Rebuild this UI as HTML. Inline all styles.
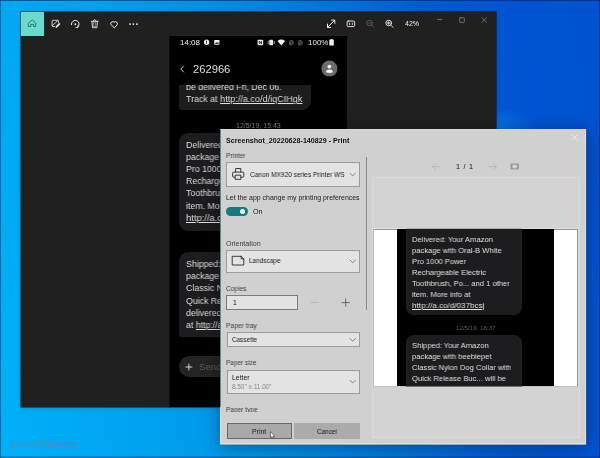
<!DOCTYPE html>
<html><head><meta charset="utf-8">
<style>
*{margin:0;padding:0;box-sizing:border-box}
html,body{width:600px;height:458px;overflow:hidden}
body{position:relative;font-family:"Liberation Sans",sans-serif;background:#0c63d9}
.abs,.t,.box,svg{position:absolute}
.layer{position:absolute;left:0;top:0;width:600px;height:458px}
.t{will-change:transform}
#bg{background:radial-gradient(ellipse 42px 26px at 497px 133px,rgba(25,150,240,.55),rgba(25,150,240,0) 100%),linear-gradient(80deg,#00b1f8 0%,#00a5f2 17.6%,#009cec 29.4%,#008ce4 44%,#0076dc 58.8%,#005ad0 75%,#0054d3 87%,#0052cf 100%);box-shadow:inset 1px 0 0 rgba(0,40,90,.5),inset -1px 0 0 rgba(0,30,90,.5),inset 0 -1.5px 0.5px rgba(0,50,110,.45),inset 0 1px 0 rgba(0,30,70,.55)}
#bgtop{display:none}
#win{left:20.6px;top:12.2px;width:475.4px;height:394.8px;background:#202020;box-shadow:0 0 0 .6px rgba(25,12,8,.8),0 1px 5px rgba(0,0,0,.14)}
#home{left:20.6px;top:12.2px;width:23.2px;height:23.6px;background:#69dbcb}
#phone{clip-path:inset(36px 253px 50.9px 169.5px);background:#000;color:#dedede}
.t{white-space:nowrap;line-height:1;transform-origin:0 50%}
.m{font-size:9px;color:#dedede;transform:scaleX(.975)}
.bub{position:absolute;background:#1d1d1f;border-radius:9px}
#dlg{clip-path:inset(129.3px 13.9px 13.5px 220px);background:#d0d0d0;color:#1a1a1a}
.d{font-size:6.9px;transform:scaleX(.95)}
.lbl{color:#3c3c3c}
.box{background:#e3e3e3;border:1px solid #9c9c9c}
u{text-decoration-thickness:.5px;text-underline-offset:1px}
</style></head><body>
<div id="bg" class="layer"></div>
<div id="bgtop" class="abs"></div>
<div id="win" class="abs"></div>
<div id="home" class="abs"></div>


<!-- toolbar icons -->
<svg style="left:0;top:0" width="600" height="458" viewBox="0 0 600 458" fill="none" stroke="#f2f2f2" stroke-width="0.9" stroke-linecap="round" stroke-linejoin="round">
  <!-- home -->
  <path d="M28.7 23 L32.2 19.9 L35.7 23 V26.5 H33.5 V24.4 H30.9 V26.5 H28.7 Z" stroke="#245853" stroke-width="0.75"/>
  <!-- edit -->
  <g transform="translate(0.4 0)"><path d="M58 22.4 V21 Q58 20.3 57.3 20.3 H52.4 Q51.7 20.3 51.7 21 V25.9 Q51.7 26.6 52.4 26.6 H54.2 M52 25.6 L57.4 20.6" stroke-width="0.8"/>
  <path d="M55.6 27.3 L55.9 26.1 L58.9 23.2 L59.8 24.1 L56.8 27 Z" stroke-width="0.7" fill="#f2f2f2"/></g>
  <!-- rotate -->
  <path d="M71.4 24.6 A3.9 3.9 0 1 1 77.6 27.4" stroke-width="0.95"/>
  <path d="M76 27.6 H77.8 V25.8" stroke-width="0.9"/>
  <circle cx="75.3" cy="24.3" r="0.95" fill="#f2f2f2" stroke="none"/>
  <!-- trash -->
  <path d="M91.2 21.3 H98.2 M93.4 21.1 A1.3 1.3 0 0 1 96 21.1 M92 21.5 L92.5 27.7 H96.9 L97.4 21.5" stroke-width="0.85"/>
  <rect x="93.7" y="22.7" width="2" height="3.8" stroke-width="0.7" stroke="#bdbdbd"/>
  <!-- heart -->
  <path d="M114.05 27.6 L110.8 24.4 A2.08 2.08 0 0 1 114.05 22.1 A2.08 2.08 0 0 1 117.3 24.4 Z" stroke-width="0.95"/>
  <!-- dots -->
  <g fill="#f2f2f2" stroke="none"><circle cx="130" cy="24.1" r="0.9"/><circle cx="133.4" cy="24.1" r="0.9"/><circle cx="136.9" cy="24.1" r="0.9"/></g>
  <!-- expand -->
  <path d="M327.7 27.2 L334.6 20.3 M331.6 20.1 H334.8 V23.3 M327.5 24.1 V27.4 H330.7" stroke-width="1"/>
  <!-- aspect -->
  <rect x="347.1" y="21" width="7.5" height="5.6" rx="1.1"/>
  <path d="M349.4 22.9 V24.8 M352.3 22.9 V24.8" stroke-width="0.8"/>
  <!-- zoom out -->
  <g stroke="#5c5c5c"><circle cx="369.6" cy="23" r="2.8"/><path d="M371.7 25.1 L373.9 27.3 M368.3 23 H370.9"/></g>
  <!-- zoom in -->
  <circle cx="388.7" cy="23" r="2.8"/><path d="M390.8 25.1 L393 27.3 M387.4 23 H390 M388.7 21.7 V24.3"/>
  <!-- window controls -->
  <g stroke="#8e8e8e" stroke-width="0.7"><path d="M437.4 19.6 H441.8"/><rect x="459.7" y="17.8" width="4.6" height="4.6" rx="0.5"/><path d="M481.9 17.6 L486.6 22.3 M486.6 17.6 L481.9 22.3"/></g>
</svg>
<div class="t" style="left:404.5px;top:20.3px;font-size:7px;color:#f0f0f0;transform:scaleX(.98)">42%</div>

<!-- phone screenshot -->
<div id="phone" class="layer">
  <div class="bub" style="left:179px;top:70px;width:132px;height:39.5px;border-radius:9px 9px 9px 2.5px"></div>
  <div class="t m" style="left:186.0px;top:82.7px">be delivered Fri, Dec 06.</div>
  <div class="abs" style="left:169px;top:36px;width:179px;height:48.5px;background:#000"></div>
  <div class="t" style="left:179.5px;top:38.5px;font-size:8px;color:#e8e8e8">14:08</div>
  <div class="t" style="left:307.5px;top:38.5px;font-size:8px;color:#e8e8e8">100%</div>
  <div class="t" style="left:192.5px;top:63.5px;font-size:11.2px;color:#dcdcdc">262966</div>
  <div class="t m" style="left:186.0px;top:94.6px">Track at <u style="display:inline-block;transform:scaleX(1.035);transform-origin:0 50%">http://a.co/d/iqCIHgk</u></div>
  <div class="t" style="left:236px;top:121.5px;font-size:7px;color:#808080">12/5/19, 15:43</div>
  <div class="bub" style="left:179px;top:133px;width:150px;height:98px"></div>
  <div class="t m" style="left:186.0px;top:140.5px">Delivered: Your Amazon</div>
  <div class="t m" style="left:186.0px;top:152.7px">package with Oral-B White</div>
  <div class="t m" style="left:186.0px;top:164.9px">Pro 1000 Power</div>
  <div class="t m" style="left:186.0px;top:177.1px">Rechargeable Electric</div>
  <div class="t m" style="left:186.0px;top:189.3px">Toothbrush, Po... and 1 other</div>
  <div class="t m" style="left:186.0px;top:201.5px">item. More info at</div>
  <div class="t m" style="left:186.0px;top:213.7px"><u style="display:inline-block;transform:scaleX(1.07);transform-origin:0 50%">http://a.co/d/037bcsj</u></div>
  <div class="bub" style="left:179px;top:252px;width:150px;height:84.8px;border-radius:9px 9px 9px 3px"></div>
  <div class="t m" style="left:186.0px;top:260.0px">Shipped: Your Amazon</div>
  <div class="t m" style="left:186.0px;top:272.2px">package with beebiepet</div>
  <div class="t m" style="left:186.0px;top:284.4px">Classic Nylon Dog Collar with</div>
  <div class="t m" style="left:186.0px;top:296.6px">Quick Release Buc... will be</div>
  <div class="t m" style="left:186.0px;top:308.8px">delivered Sat, Dec 07. Track</div>
  <div class="t m" style="left:186.0px;top:321.0px">at <u>http://a.co/d/9gBfC3u</u></div>
  <div class="bub" style="left:179.3px;top:356px;width:160px;height:21px;border-radius:10.5px;background:#242424"></div>
  <div class="t" style="left:199px;top:362.2px;font-size:9.6px;color:#5c5c5c">Send message</div>
  <svg style="left:0;top:0" width="600" height="458" viewBox="0 0 600 458">
    <circle cx="206.6" cy="42.3" r="2.7" fill="#f0f0f0"/><rect x="206.2" y="40.7" width="0.8" height="2.1" fill="#000"/><rect x="206.2" y="43.3" width="0.8" height="0.8" fill="#000"/>
    <rect x="214.2" y="39.9" width="5.2" height="4.8" rx="0.6" fill="#f0f0f0"/><path d="M214.9 43.7 L216.2 42.2 L217.1 43 L218 41.9 L218.9 43.7 Z" fill="#000"/>
    <rect x="257.6" y="39.8" width="5.6" height="5.4" rx="0.7" fill="#e8e8e8"/><path d="M259.3 44 V41 L261.5 44 V41" stroke="#000" stroke-width="0.7" fill="none"/>
    <rect x="269.3" y="39.7" width="3.8" height="5.6" rx="0.8" fill="#e8e8e8"/><path d="M268.2 41 V44 M274.2 41 V44" stroke="#e8e8e8" stroke-width="0.7"/>
    <path d="M277.5 40.9 Q281.3 38.3 285.1 40.9 L281.3 45.5 Z" fill="#f0f0f0"/>
    <path d="M289 39.9 H292 L293.7 41.6 V45.2 H289 Z" fill="#4a4a4a"/><path d="M288.7 39.6 L294 45.4" stroke="#000" stroke-width="0.7"/>
    <path d="M298 39.9 H301 L302.7 41.6 V45.2 H298 Z" fill="#4a4a4a"/><path d="M297.7 39.6 L303 45.4" stroke="#000" stroke-width="0.7"/>
    <path d="M330.6 39 H332.5 V39.8 H333.8 V45.5 H329.3 V39.8 H330.6 Z" fill="#f0f0f0"/>
    <path d="M183.6 66 L180.8 69 L183.6 72" stroke="#d8d8d8" stroke-width="0.9" fill="none" stroke-linecap="round" stroke-linejoin="round"/>
    <circle cx="329.4" cy="68.6" r="8" fill="#6b6b6b"/>
    <circle cx="329.4" cy="66.6" r="1.9" fill="#f4f4f4"/><path d="M325.9 72.3 Q325.9 69.4 329.4 69.4 Q332.9 69.4 332.9 72.3 Q329.4 73.8 325.9 72.3 Z" fill="#f4f4f4"/>
    <path d="M185.5 367 H192.3 M188.9 363.6 V370.4" stroke="#e4e4e4" stroke-width="0.9"/>
  </svg>
</div>

<!-- print dialog -->
<div class="abs" style="left:219.6px;top:128.9px;width:366.8px;height:315.9px;background:#4a9292;box-shadow:0 2px 16px rgba(0,0,0,.36)"></div>
<div id="dlg" class="layer">
  <div class="abs" style="left:220px;top:129.3px;width:366.1px;height:315.2px;border:1px solid #e4deda"></div>
  <div class="abs" style="left:220px;top:129.3px;width:.7px;height:278px;background:#4f9090"></div>
  <div class="t" style="left:226px;top:138.4px;font-size:7.1px;font-weight:bold;color:#111;transform:scaleX(1.005)">Screenshot_20220628-140829 - Print</div>
  <div class="t d lbl" style="left:226px;top:152.6px;transform:scaleX(0.964)">Printer</div>
  <div class="box" style="left:226.3px;top:162.3px;width:133.3px;height:24.6px"></div>
  <div class="t d" style="left:249.5px;top:172.3px;transform:scaleX(0.95)">Canon MX920 series Printer WS</div>
  <div class="t d" style="left:226px;top:194.5px;transform:scaleX(1.005)">Let the app change my printing preferences</div>
  <div class="abs" style="left:226px;top:206.7px;width:21.7px;height:9.8px;border-radius:5px;background:#147a7c"></div>
  <div class="abs" style="left:240px;top:208.9px;width:5.4px;height:5.4px;border-radius:3px;background:#fff"></div>
  <div class="t d" style="left:253px;top:208.5px;transform:scaleX(1.043)">On</div>
  <div class="t d lbl" style="left:226px;top:240.5px;transform:scaleX(1.028)">Orientation</div>
  <div class="box" style="left:226.3px;top:250.2px;width:133.3px;height:22.4px"></div>
  <div class="t d" style="left:249px;top:257.5px;transform:scaleX(0.933)">Landscape</div>
  <div class="t d lbl" style="left:226px;top:285.5px;transform:scaleX(0.954)">Copies</div>
  <div class="box" style="left:226.3px;top:294.6px;width:71.4px;height:15.2px;border-color:#7c7c7c"></div>
  <div class="t d" style="left:232.5px;top:300.0px;transform:scaleX(1.0)">1</div>
  <div class="t d lbl" style="left:226px;top:322.5px;transform:scaleX(0.974)">Paper tray</div>
  <div class="box" style="left:226.5px;top:332px;width:133px;height:15px"></div>
  <div class="t d" style="left:232px;top:337.0px;transform:scaleX(0.929)">Cassette</div>
  <div class="t d lbl" style="left:226px;top:359.5px;transform:scaleX(0.936)">Paper size</div>
  <div class="box" style="left:226.5px;top:369.5px;width:133px;height:24px"></div>
  <div class="t d" style="left:232px;top:374.5px;transform:scaleX(0.981)">Letter</div>
  <div class="t d" style="left:232px;top:383.7px;color:#858585;transform:scaleX(0.932)">8.50" x 11.00"</div>
  <div class="abs" style="left:224px;top:400px;width:138px;height:12px;overflow:hidden"><div class="t d lbl" style="left:2px;top:6.7px;transform:scaleX(0.95)">Paper type</div></div>
  <div class="abs" style="left:226.5px;top:423.2px;width:65.5px;height:15.6px;background:#a9a9a9;border:1px solid #686868"></div>
  <div class="t d" style="left:252px;top:429px;transform:scaleX(1.0)">Print</div>
  <div class="abs" style="left:294px;top:423.1px;width:65.5px;height:15.7px;background:#ababab"></div>
  <div class="t d" style="left:317px;top:429px;transform:scaleX(0.931)">Cancel</div>
  <div class="abs" style="left:365.6px;top:157px;width:1.2px;height:153px;background:#8a8a8a"></div>
  <svg style="left:0;top:0" width="600" height="458" viewBox="0 0 600 458" fill="none" stroke="#2a2a2a" stroke-width="0.9" stroke-linejoin="round" stroke-linecap="round">
    <!-- printer -->
    <path d="M235.6 172 V168.5 H240.8 V172"/>
    <path d="M235.4 177.2 H233.6 Q232.6 177.2 232.6 176.2 V173.1 Q232.6 172.1 233.6 172.1 H242.8 Q243.8 172.1 243.8 173.1 V176.2 Q243.8 177.2 242.8 177.2 H241"/>
    <rect x="235.5" y="175.2" width="5.4" height="4.1"/>
    <!-- landscape page -->
    <path d="M232.6 256.3 H241.2 L243.8 258.9 V265 H232.6 Z M241.2 256.3 V258.9 H243.8"/>
    <!-- chevrons -->
    <g stroke="#5e5e5e" stroke-width="0.7"><path d="M350 173.2 L352.7 175.9 L355.4 173.2"/><path d="M350 260 L352.7 262.7 L355.4 260"/><path d="M350 338.5 L352.7 341.2 L355.4 338.5"/><path d="M350 380.3 L352.7 383 L355.4 380.3"/></g>
    <!-- minus plus -->
    <path d="M311 302.4 H318.7" stroke="#b2b2b2" stroke-width="0.8"/>
    <path d="M342 302.6 H349.4 M345.7 298.9 V306.3" stroke="#505050" stroke-width="0.8"/>
    <!-- pager -->
    <g stroke="#b4b4b4" stroke-width="0.7"><path d="M432.5 166.6 H440.4 M435.6 163.5 L432.5 166.6 L435.6 169.7"/><path d="M488.6 166.6 H496.4 M493.3 163.5 L496.4 166.6 L493.3 169.7"/></g>
    <rect x="510.5" y="163.5" width="8.4" height="5.9" fill="#9a9a9a" stroke="none"/>
    <path d="M512 166.45 L513.4 164.7 H516 L517.4 166.45 L516 168.2 H513.4 Z" fill="#d6d6d6" stroke="none"/>
    <!-- close -->
    <path d="M572.3 135.1 L577.1 139.9 M577.1 135.1 L572.3 139.9" stroke="#f4f4f4" stroke-width="0.8"/>
  </svg>
  <!-- preview -->
  <div class="abs" style="left:372px;top:176.8px;width:208.3px;height:261.6px;border:1px solid #dadada;background:#d3d3d3"></div>
  <div class="t d" style="left:456px;top:163.2px;font-size:7.2px;transform:none;letter-spacing:.75px;color:#111">1 / 1</div>
  <div id="pv" class="layer" style="clip-path:inset(228.8px 22px 71.4px 373.4px);background:#fff;color:#e0e0e0">
    <div class="abs" style="left:373.4px;top:228.8px;width:204.6px;height:157.8px;border:.8px solid #9c9c9c"></div>
    <div class="abs" style="left:397.3px;top:228.8px;width:157px;height:157.3px;background:#000"></div>
    <div class="bub" style="left:405.8px;top:215px;width:116.6px;height:100px;border-radius:8px"></div>
    <div class="t p" style="left:412px;top:236.1px">Delivered: Your Amazon</div>
    <div class="t p" style="left:412px;top:247.0px">package with Oral-B White</div>
    <div class="t p" style="left:412px;top:257.9px">Pro 1000 Power</div>
    <div class="t p" style="left:412px;top:268.8px">Rechargeable Electric</div>
    <div class="t p" style="left:412px;top:279.7px">Toothbrush, Po... and 1 other</div>
    <div class="t p" style="left:412px;top:290.6px">item. More info at</div>
    <div class="t p" style="left:412px;top:301.5px"><u style="display:inline-block;transform:scaleX(1.07);transform-origin:0 50%">http://a.co/d/037bcsj</u></div>
    <div class="t" style="left:456px;top:325.3px;font-size:6.2px;color:#5a5a5a">12/5/19, 18:37</div>
    <div class="bub" style="left:405.8px;top:334.8px;width:116.6px;height:100px;border-radius:8px"></div>
    <div class="t p" style="left:412px;top:341.9px">Shipped: Your Amazon</div>
    <div class="t p" style="left:412px;top:352.8px">package with beebiepet</div>
    <div class="t p" style="left:412px;top:363.7px">Classic Nylon Dog Collar with</div>
    <div class="t p" style="left:412px;top:374.6px">Quick Release Buc... will be</div>
    <div class="t p" style="left:412px;top:385.5px">delivered Sat, Dec 07. Track</div>
  </div>
</div>
<style>.p{font-size:7.7px;color:#e0e0e0;transform:scaleX(.985)}</style>
<svg style="left:269.5px;top:430.5px" width="6" height="9" viewBox="0 0 6 9"><path d="M0.6 0.6 V6.9 L2 5.6 L3 7.9 L4 7.5 L3 5.3 H4.9 Z" fill="#fff" stroke="#222" stroke-width="0.55" stroke-linejoin="round"/></svg>
<div class="t" style="left:9px;top:438.4px;font-family:'Liberation Serif',serif;font-size:11px;color:rgba(122,126,130,.72);transform:scaleX(.965)">groovyPost.com</div>
</body></html>
